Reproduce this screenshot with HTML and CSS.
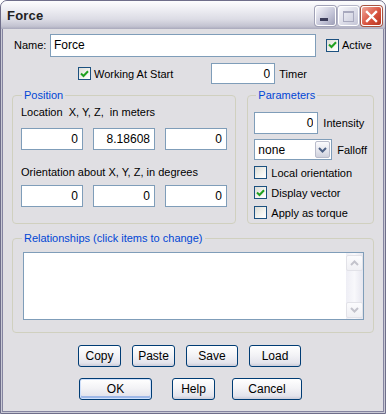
FILE: index.html
```html
<!DOCTYPE html>
<html lang="en">
<head>
  <meta charset="UTF-8" />
  <title>Force</title>
  <link rel="stylesheet" href="styles.css">
</head>
<body>

<div class="window">
  <div class="titlebar">
    <span class="title">Force</span>
    <div class="controls">
      <div class="tbtn tmin"><span class="min-bar"></span></div>
      <div class="tbtn tmax"><span class="max-box"></span></div>
      <div class="tbtn tclose">
        <svg width="13" height="13" viewBox="0 0 13 13"><path d="M2 2 L11 11 M11 2 L2 11" stroke="#fff" stroke-width="2.4" stroke-linecap="square"/></svg>
      </div>
    </div>
  </div>

  <div class="client">
    <div class="name-row">
      <span class="lbl name-lbl">Name:</span>
      <input class="field name-field" type="text" value="Force">
      <span class="check on"><svg width="9" height="8" viewBox="0 0 9 8"><path d="M1 3.5 L3.5 6 L8 1.2" fill="none" stroke="#21a121" stroke-width="2"/></svg></span>
      <span class="lbl">Active</span>
    </div>

    <div class="start-row">
      <span class="check on"><svg width="9" height="8" viewBox="0 0 9 8"><path d="M1 3.5 L3.5 6 L8 1.2" fill="none" stroke="#21a121" stroke-width="2"/></svg></span>
      <span class="lbl">Working At Start</span>
      <input class="field num timer-field" type="text" value="0">
      <span class="lbl">Timer</span>
    </div>

    <div class="groups">
      <fieldset class="group pos">
        <legend>Position</legend>
        <div class="sub-lbl">Location&nbsp; X, Y, Z,&nbsp; in meters</div>
        <div class="xyz">
          <input class="field num" type="text" value="0">
          <input class="field num" type="text" value="8.18608">
          <input class="field num" type="text" value="0">
        </div>
        <div class="sub-lbl second">Orientation about X, Y, Z, in degrees</div>
        <div class="xyz">
          <input class="field num" type="text" value="0">
          <input class="field num" type="text" value="0">
          <input class="field num" type="text" value="0">
        </div>
      </fieldset>

      <fieldset class="group params">
        <legend>Parameters</legend>
        <div class="param-row">
          <input class="field num intensity" type="text" value="0">
          <span class="lbl">Intensity</span>
        </div>
        <div class="param-row falloff-row">
          <div class="combo">
            <span class="combo-text">none</span>
            <span class="combo-btn"><svg width="9" height="6" viewBox="0 0 9 6"><path d="M1 1 L4.5 4.5 L8 1" fill="none" stroke="#4d6185" stroke-width="2"/></svg></span>
          </div>
          <span class="lbl">Falloff</span>
        </div>
        <div class="check-row"><span class="check"></span><span class="lbl">Local orientation</span></div>
        <div class="check-row"><span class="check on"><svg width="9" height="8" viewBox="0 0 9 8"><path d="M1 3.5 L3.5 6 L8 1.2" fill="none" stroke="#21a121" stroke-width="2"/></svg></span><span class="lbl">Display vector</span></div>
        <div class="check-row"><span class="check"></span><span class="lbl">Apply as torque</span></div>
      </fieldset>
    </div>

    <fieldset class="group rel">
      <legend>Relationships (click items to change)</legend>
      <div class="listbox">
        <div class="scrollbar">
          <span class="sbtn"><svg width="9" height="6" viewBox="0 0 9 6"><path d="M1 5 L4.5 1.5 L8 5" fill="none" stroke="#c3c3cc" stroke-width="2"/></svg></span>
          <span class="sbtn"><svg width="9" height="6" viewBox="0 0 9 6"><path d="M1 1 L4.5 4.5 L8 1" fill="none" stroke="#c3c3cc" stroke-width="2"/></svg></span>
        </div>
      </div>
    </fieldset>

    <div class="btn-row row-one">
      <button class="btn w43">Copy</button>
      <button class="btn w43">Paste</button>
      <button class="btn w52">Save</button>
      <button class="btn w52">Load</button>
    </div>
    <div class="btn-row row-two">
      <button class="btn default ok">OK</button>
      <button class="btn w43 help">Help</button>
      <button class="btn cancel">Cancel</button>
    </div>
  </div>
</div>

</body>
</html>
```

FILE: styles.css
```css
body { margin: 0; background: #fff; font-family: "Liberation Sans", Arial, sans-serif; font-size: 11px; color: #000; }

.window { width: 386px; height: 414px; box-sizing: border-box; border: 1px solid #6f6e8a; border-radius: 7px 7px 0 0; background: #c9c9d5; overflow: hidden; display: flex; flex-direction: column; }

/* title bar */
.titlebar { height: 28px; flex: none; display: flex; align-items: center; justify-content: space-between; padding: 0 3px 0 6px; background: linear-gradient(#fdfdfe 0%, #eeeef3 30%, #dcdce5 65%, #c3c3d1 90%, #a9a9bc 100%); }
.title { font-weight: bold; font-size: 13px; color: #222; letter-spacing: 0.2px; }
.controls { display: flex; gap: 2px; margin-top: 2px; }
.tbtn { width: 21px; height: 20px; box-sizing: border-box; border: 1px solid #fff; border-radius: 3px; display: flex; align-items: center; justify-content: center; position: relative; }
.tmin { background: linear-gradient(135deg, #f5f5fa, #c3c4d7 60%, #9d9eb6); box-shadow: 0 0 0 1px #a0a1b6; }
.tmax { background: linear-gradient(135deg, #f7f7fb, #d9dae6 60%, #c4c5d6); box-shadow: 0 0 0 1px #b5b6c8; }
.tclose { background: linear-gradient(135deg, #f0a89c, #d9533f 55%, #b83420); box-shadow: 0 0 0 1px #a8523f; }
.min-bar { width: 8px; height: 3px; background: #3c3d5a; margin-top: 7px; margin-left: -3px; }
.max-box { width: 9px; height: 8px; border: 1px solid #a8a9be; border-top-width: 2px; }

/* client area */
.client { flex: 1; margin: 0 1px 1px; border: 1px solid #8584a0; border-top: none; background: #e0dfe3; padding: 5px 9px 0; }

.lbl { white-space: nowrap; }
.field { box-sizing: border-box; height: 22px; border: 1px solid #7f9db9; background: #fff; font-family: inherit; font-size: 12px; padding: 0 3px; margin: 0; color: #000; outline: none; }
.num { text-align: right; padding-right: 4px; }

.check { width: 13px; height: 13px; box-sizing: border-box; border: 1px solid #1c5180; background: linear-gradient(135deg, #dcdcd7, #f4f4f0 60%, #fff); display: inline-flex; align-items: center; justify-content: center; flex: none; }

.name-row { display: flex; align-items: center; height: 22px; }
.name-lbl { margin-left: 2px; width: 36px; }
.name-field { width: 266px; height: 23px; }
.name-row .check { margin-left: 10px; margin-right: 3px; }

.start-row { display: flex; align-items: center; height: 21px; margin-top: 7px; padding-left: 66px; }
.start-row .check { margin-right: 3px; }
.timer-field { width: 64px; height: 21px; margin-left: 38px; margin-right: 4px; }

/* group boxes */
.groups { display: flex; gap: 11px; margin-top: 5px; }
.group { margin: 0; box-sizing: border-box; border: 1px solid #d0d0bf; border-radius: 4px; min-width: 0; }
.group legend { color: #0046d5; line-height: 13px; padding: 0 2px; }
.pos { width: 225px; height: 135px; padding: 4px 8px 0; }
.pos legend { margin-left: 1px; }
.sub-lbl { line-height: 13px; margin-bottom: 9px; white-space: nowrap; }
.sub-lbl.second { margin-top: 16px; margin-bottom: 6px; }
.xyz { display: flex; gap: 10px; }
.xyz .field { width: 62px; }

.params { width: 127px; height: 135px; padding: 4px 6px 0; }
.params legend { margin-left: 2px; }
.param-row { display: flex; align-items: center; margin-top: 6px; }
.intensity { width: 64px; margin-right: 5px; }
.falloff-row { margin-top: 5px; }
.combo { width: 78px; height: 21px; box-sizing: border-box; border: 1px solid #7f9db9; background: #fff; display: flex; align-items: center; justify-content: space-between; margin-right: 5px; font-size: 12px; }
.combo-text { padding-left: 3px; }
.combo-btn { width: 15px; height: 17px; margin-right: 1px; box-sizing: border-box; border: 1px solid #b9bccb; border-radius: 2px; background: linear-gradient(#fbfbfd, #e3e4ec 60%, #cfd1dc); display: flex; align-items: center; justify-content: center; }
.check-row { display: flex; align-items: center; height: 13px; margin-top: 7px; gap: 4px; }
.falloff-row + .check-row { margin-top: 6px; }

.rel { width: 362px; height: 101px; margin-top: 8px; padding: 7px 9px 0 10px; }
.rel legend { margin-left: -1px; }
.listbox { height: 68px; box-sizing: border-box; border: 1px solid #7f9db9; background: #fff; display: flex; justify-content: flex-end; }
.scrollbar { width: 17px; background: linear-gradient(90deg, #eeeef5, #f8f8fb 50%, #e6e6ef); display: flex; flex-direction: column; justify-content: space-between; padding: 2px 0 1px; }
.sbtn { height: 16px; box-sizing: border-box; border: 1px solid #e2e2e8; border-radius: 2px; background: linear-gradient(#fbfbfd, #f0f0f4); display: flex; align-items: center; justify-content: center; }

/* push buttons */
.btn-row { display: flex; }
.row-one { margin-top: 12px; padding-left: 66px; gap: 11px; }
.row-two { margin-top: 11px; padding-left: 67px; }
.btn { height: 22px; box-sizing: border-box; border: 1px solid #003c74; border-radius: 3px; background: linear-gradient(#ffffff, #f3f3f6 45%, #e4e4ec 85%, #c9cad8); font-family: inherit; font-size: 12px; color: #000; padding: 0; box-shadow: inset 0 -1px 0 #d0d1dd; }
.w43 { width: 43px; }
.w52 { width: 52px; }
.ok { width: 73px; }
.help { margin-left: 20px; }
.cancel { width: 70px; margin-left: 17px; }
.default { box-shadow: inset 0 0 0 1px #cfe0fb, inset 0 -2px 0 1px #9eb8e8; }
```
